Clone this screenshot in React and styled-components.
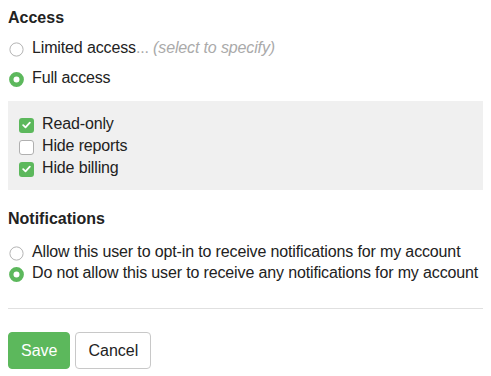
import React from "react";
import styled, { createGlobalStyle } from "styled-components";

const Global = createGlobalStyle`
  html, body { margin: 0; padding: 0; background: #fff; }
  body { margin: 8px; font-family: "Liberation Sans", Arial, sans-serif; font-size: 16px; color: #222; }
  * { box-sizing: border-box; }
`;

const Form = styled.form`
  display: flex;
  flex-direction: column;
`;

const Heading = styled.h3`
  margin: 0;
  font-size: 16px;
  font-weight: bold;
  line-height: 20px;
  color: #222;
`;

const Section = styled.div`
  display: flex;
  flex-direction: column;
  margin-top: ${(p) => p.$top || 0}px;
`;

const RadioList = styled.div`
  display: flex;
  flex-direction: column;
  gap: ${(p) => p.$gap || 0}px;
  margin-top: ${(p) => p.$top || 0}px;
`;

const Row = styled.label`
  display: flex;
  align-items: center;
  height: ${(p) => p.$h || 21}px;
  line-height: 20px;
  white-space: nowrap;
  letter-spacing: -0.14px;
  cursor: pointer;
`;

const RadioIcon = styled.svg`
  flex: 0 0 15px;
  width: 15px;
  height: 15px;
  margin: 3px 8px 0 1px;
  display: block;
`;

const Radio = ({ on }) => (
  <RadioIcon viewBox="0 0 15 15">
    {on ? (
      <circle cx="7.5" cy="7.5" r="5.2" fill="#fff" stroke="#5cb85c" strokeWidth="4.4" />
    ) : (
      <circle cx="7.5" cy="7.5" r="6.6" fill="#fff" stroke="#b4b4b4" strokeWidth="1" />
    )}
  </RadioIcon>
);

const Muted = styled.span`
  color: #aaa;
`;

const Italic = styled.i`
  color: #aaa;
`;

const Panel = styled.div`
  background: #f0f0f0;
  padding: 12px 11px 11px;
  margin-top: 13px;
  display: flex;
  flex-direction: column;
`;

const Box = styled.span`
  flex: 0 0 15px;
  width: 15px;
  min-width: 15px;
  height: 15px;
  margin: 2px 8px 0 0;
  border-radius: 3px;
  display: inline-flex;
  align-items: center;
  justify-content: center;
  background: ${(p) => (p.$on ? "#5cb85c" : "#fff")};
  border: ${(p) => (p.$on ? "none" : "1px solid #b0b0b0")};
`;

const Divider = styled.hr`
  border: none;
  border-top: 1px solid #e0e0e0;
  margin: 25px 0 0;
`;

const Buttons = styled.div`
  display: flex;
  gap: 5px;
  margin-top: 23px;
`;

const Button = styled.button`
  font-family: "Liberation Sans", Arial, sans-serif;
  font-size: 16px;
  height: 37px;
  padding: 0 12px;
  border-radius: 4px;
  border: 1px solid ${(p) => (p.$primary ? "#5cb85c" : "#c8c8c8")};
  background: ${(p) => (p.$primary ? "#5cb85c" : "#fff")};
  color: ${(p) => (p.$primary ? "#fff" : "#222")};
  cursor: pointer;
`;

const Check = () => (
  <svg width="9" height="8" viewBox="0 0 9 8">
    <path d="M1.2 4.2 L3.5 6.3 L7.8 1.7" fill="none" stroke="#fff" strokeWidth="1.8" strokeLinecap="round" strokeLinejoin="round" />
  </svg>
);

export default function App() {
  return (
    <>
      <Global />
      <Form onSubmit={(e) => e.preventDefault()}>
        <Heading>Access</Heading>
        <RadioList $top={9} $gap={9}>
          <Row>
            <Radio />
            <span>
              Limited access<Muted>...</Muted> <Italic>(select to specify)</Italic>
            </span>
          </Row>
          <Row>
            <Radio on />
            <span>Full access</span>
          </Row>
        </RadioList>
        <Panel>
          <Row $h={22}>
            <Box $on><Check /></Box>
            <span>Read-only</span>
          </Row>
          <Row $h={22}>
            <Box />
            <span>Hide reports</span>
          </Row>
          <Row $h={22}>
            <Box $on><Check /></Box>
            <span>Hide billing</span>
          </Row>
        </Panel>
        <Section $top={19}>
          <Heading>Notifications</Heading>
          <RadioList $top={12}>
            <Row>
              <Radio />
              <span>Allow this user to opt-in to receive notifications for my account</span>
            </Row>
            <Row>
              <Radio on />
              <span>Do not allow this user to receive any notifications for my account</span>
            </Row>
          </RadioList>
        </Section>
        <Divider />
        <Buttons>
          <Button $primary type="submit">Save</Button>
          <Button type="button">Cancel</Button>
        </Buttons>
      </Form>
    </>
  );
}
